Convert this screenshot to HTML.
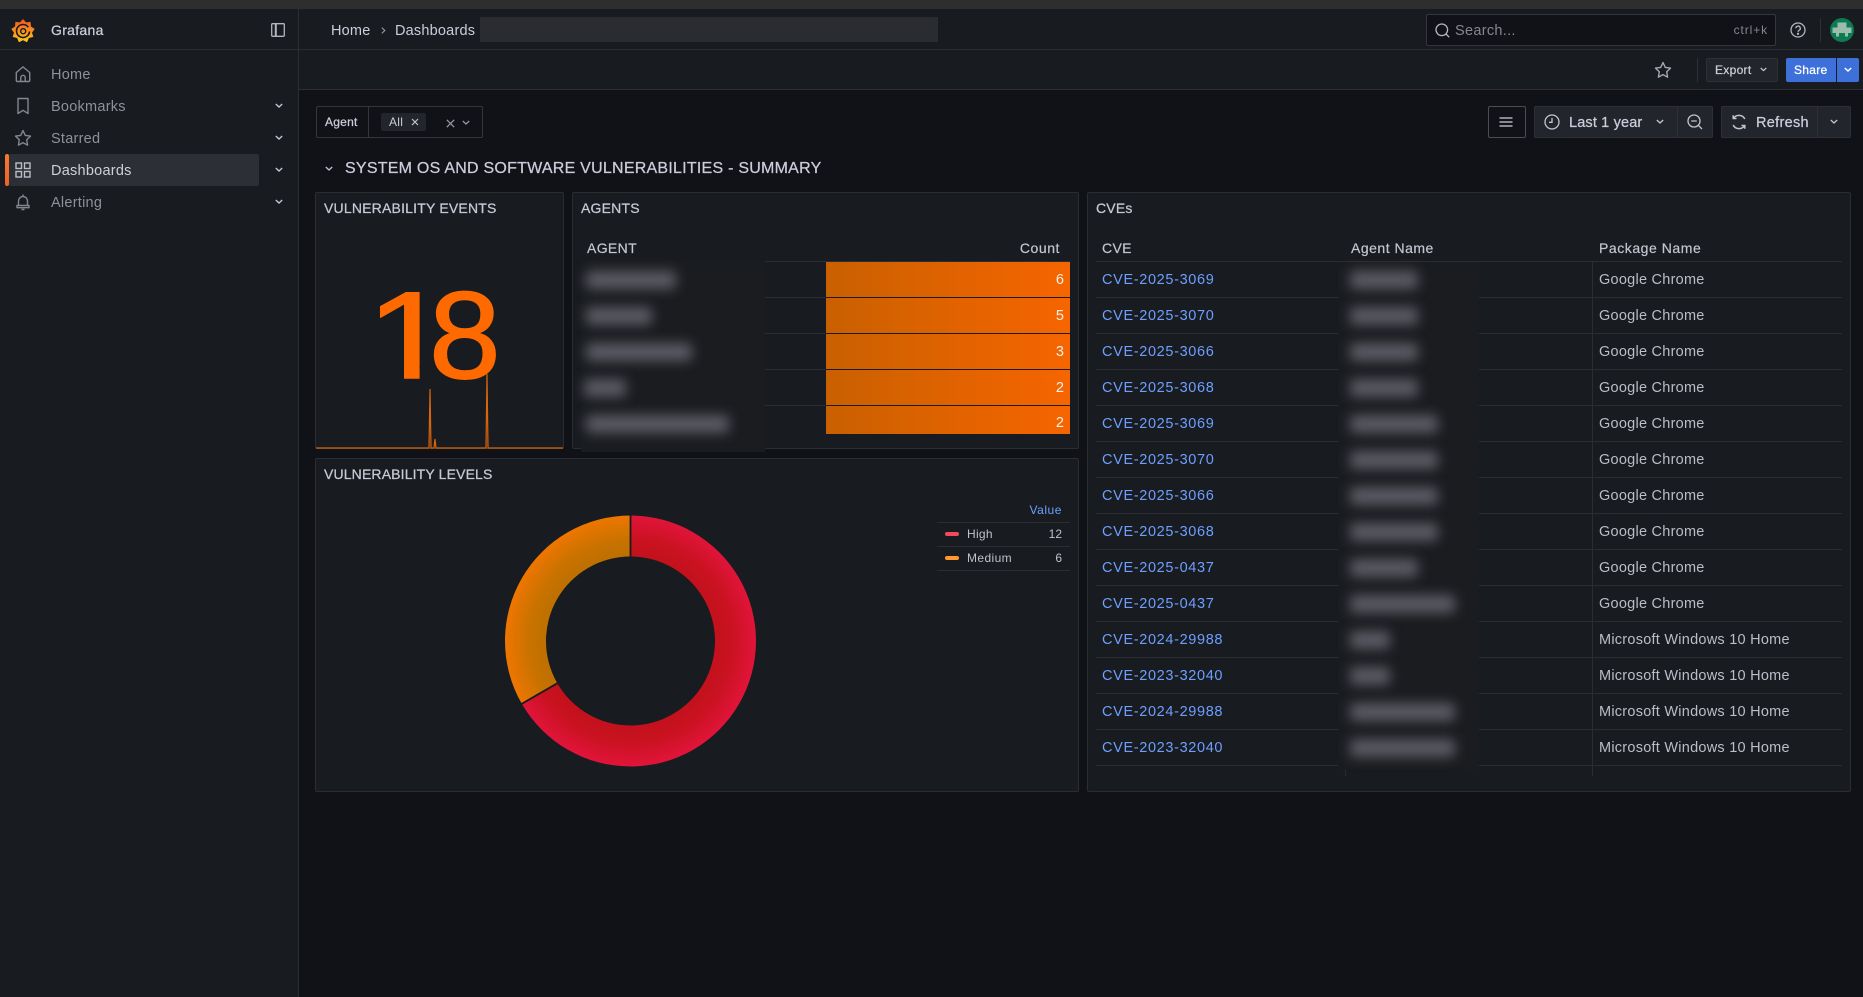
<!DOCTYPE html>
<html lang="en">
<head>
<meta charset="utf-8">
<title>Grafana</title>
<style>
html,body{margin:0;padding:0;width:1863px;height:997px;overflow:hidden;background:#111217;}
body{position:relative;font-family:"Liberation Sans",sans-serif;color:#ccccdc;font-size:14px;}
.a{position:absolute;box-sizing:border-box;}
.t{position:absolute;white-space:nowrap;line-height:20px;height:20px;}
.m{-webkit-text-stroke:.25px currentColor;}
.nav{font-size:14.5px;letter-spacing:.25px;color:#8f9099;left:51px;}
.panel{position:absolute;box-sizing:border-box;background:#181b1f;border:1px solid #2b2d33;border-radius:2px;}
.pt{font-size:14px;letter-spacing:.2px;color:#c8c9d6;-webkit-text-stroke:.25px currentColor;}
.line{position:absolute;height:1px;background:#2b2d33;}
.vl{position:absolute;width:1px;background:#2b2d33;}
.hd{font-size:14px;letter-spacing:.35px;color:#c4c5d2;-webkit-text-stroke:.2px currentColor;}
.cve{font-size:14.5px;letter-spacing:.65px;color:#6e9fff;left:1102px;}
.pk{font-size:14.5px;letter-spacing:.25px;color:#bcbdc8;left:1599px;}
.bar{position:absolute;left:826px;width:244px;background:linear-gradient(90deg,#c96000,#f66500);}
.num{position:absolute;right:799px;color:#f4f0ea;font-size:14.5px;line-height:20px;}
.bl{position:absolute;background:#5a5b63;height:18px;margin-top:-2px;filter:blur(6px);border-radius:4px;}
.big{position:absolute;white-space:nowrap;height:122px;line-height:122px;font-size:124px;color:#ff6a00;-webkit-text-stroke:1.5px #ff6a00;transform-origin:0 0;}
.btn{position:absolute;box-sizing:border-box;background:#22252b;border:1px solid #2e3036;}
svg{position:absolute;overflow:visible;display:block;}
</style>
</head>
<body>
<!-- browser strip -->
<div class="a" style="left:0;top:0;width:1863px;height:9px;background:#2e2e2e;"></div>
<!-- sidebar + header -->
<div class="a" style="left:0;top:9px;width:1863px;height:80px;background:#181b1f;"></div>
<div class="a" style="left:0;top:89px;width:298px;height:908px;background:#181b1f;"></div>
<div class="a" style="left:298px;top:9px;width:1px;height:988px;background:#2b2d33;"></div>
<div class="a" style="left:0;top:49px;width:1863px;height:1px;background:#2b2d33;"></div>
<div class="a" style="left:299px;top:89px;width:1564px;height:1px;background:#2b2d33;"></div>

<!-- logo -->
<svg style="left:10.500px;top:17.500px" width="24" height="25" viewBox="0 0 24 25">
<defs><linearGradient id="lg" x1="0" y1="1" x2="0" y2="0"><stop offset="0" stop-color="#fdc81a"/><stop offset=".4" stop-color="#fa9a1c"/><stop offset="1" stop-color="#f0562a"/></linearGradient></defs>
<path fill="url(#lg)" stroke="url(#lg)" stroke-width=".6" stroke-linejoin="round" d="M12 1.500L15.010 4.730 19.390 4.190 19.620 8.600 23.330 11 20.670 14.530 21.960 18.750 17.660 19.740 15.930 23.810 12 21.800 8.070 23.810 6.340 19.740 2.040 18.750 3.330 14.530 .67 11 4.380 8.600 4.610 4.190 8.990 4.730Z"/>
<path fill="none" stroke="#1c1a1c" stroke-width="1.600" d="M17.300 9.200A6.500 6.500 0 1 0 18.500 13.500"/>
<circle cx="12.200" cy="13.200" r="2.500" fill="none" stroke="#1c1a1c" stroke-width="1.400"/>
</svg>
<div class="t m" style="left:51px;top:20px;font-size:14px;letter-spacing:.3px;">Grafana</div>
<svg style="left:271px;top:23px" width="14" height="14" viewBox="0 0 14 14" fill="none" stroke="#b4b5c0" stroke-width="1.300"><rect x=".7" y=".7" width="12.600" height="12.600" rx="1"/><path d="M4.800 .7v12.600" stroke-width="2"/></svg>

<!-- nav -->
<div class="a" style="left:9px;top:154px;width:250px;height:32px;background:#2d2f36;border-radius:2px;"></div>
<div class="a" style="left:5px;top:154px;width:4px;height:32px;background:linear-gradient(180deg,#f97a2c,#f0602a);border-radius:2px;"></div>
<div class="t nav" style="top:65px;">Home</div>
<div class="t nav" style="top:97px;">Bookmarks</div>
<div class="t nav" style="top:129px;">Starred</div>
<div class="t nav" style="top:161px;color:#cfd0dc;">Dashboards</div>
<div class="t nav" style="top:193px;">Alerting</div>
<svg style="left:14px;top:65px" width="18" height="18" viewBox="0 0 18 18" fill="none" stroke="#85868f" stroke-width="1.400" stroke-linejoin="round"><path d="M2.300 7.500 9 1.900l6.700 5.600v7.700a1.300 1.300 0 0 1-1.300 1.300H3.600a1.300 1.300 0 0 1-1.300-1.300z"/><path d="M6.800 16.500v-4a2.200 2.200 0 0 1 4.400 0v4"/></svg>
<svg style="left:14px;top:97px" width="18" height="18" viewBox="0 0 18 18" fill="none" stroke="#85868f" stroke-width="1.400" stroke-linejoin="round"><path d="M4 1.500h10v15L9 13.300 4 16.500z"/></svg>
<svg style="left:14px;top:129px" width="18" height="18" viewBox="0 0 18 18" fill="none" stroke="#85868f" stroke-width="1.400" stroke-linejoin="round"><path d="M9 1.500l2.300 4.900 5.200.7-3.800 3.700.9 5.400L9 13.600l-4.600 2.600.9-5.400-3.800-3.700 5.200-.7z"/></svg>
<svg style="left:14px;top:161px" width="18" height="18" viewBox="0 0 18 18" fill="none" stroke="#bcbdc8" stroke-width="1.400"><rect x="2" y="2" width="5.500" height="5.500"/><rect x="10.500" y="2" width="5.500" height="5.500"/><rect x="2" y="10.500" width="5.500" height="5.500"/><rect x="10.500" y="10.500" width="5.500" height="5.500"/></svg>
<svg style="left:14px;top:193px" width="18" height="18" viewBox="0 0 18 18" fill="none" stroke="#85868f" stroke-width="1.400" stroke-linejoin="round"><path d="M4.500 12.500V8a4.500 4.500 0 0 1 9 0v4.500"/><path d="M3 12.500h12v2.200H3z"/><path d="M9 1.500v2M7.500 16.500h3"/></svg>
<svg style="left:275px;top:103px" width="8" height="6" viewBox="0 0 8 6" fill="none" stroke="#c4c5d0" stroke-width="1.400"><path d="M.8 1l3.200 3 3.200-3"/></svg>
<svg style="left:275px;top:135px" width="8" height="6" viewBox="0 0 8 6" fill="none" stroke="#c4c5d0" stroke-width="1.400"><path d="M.8 1l3.200 3 3.200-3"/></svg>
<svg style="left:275px;top:167px" width="8" height="6" viewBox="0 0 8 6" fill="none" stroke="#c4c5d0" stroke-width="1.400"><path d="M.8 1l3.200 3 3.200-3"/></svg>
<svg style="left:275px;top:199px" width="8" height="6" viewBox="0 0 8 6" fill="none" stroke="#c4c5d0" stroke-width="1.400"><path d="M.8 1l3.200 3 3.200-3"/></svg>

<!-- breadcrumbs -->
<div class="t" style="left:331px;top:21px;font-size:14.5px;letter-spacing:.2px;">Home</div>
<svg style="left:381px;top:27px" width="5" height="7" viewBox="0 0 5 7" fill="none" stroke="#9a9ba5" stroke-width="1.100"><path d="M.8 .6L3.800 3.500 .8 6.400"/></svg>
<div class="t" style="left:395px;top:21px;font-size:14.5px;letter-spacing:.2px;">Dashboards</div>
<div class="a" style="left:480px;top:17px;width:458px;height:25px;background:#2a2c31;"></div>

<!-- search -->
<div class="a" style="left:1426px;top:14px;width:350px;height:32px;background:#111217;border:1px solid #34363c;border-radius:2px;"></div>
<svg style="left:1435px;top:23px" width="15" height="15" viewBox="0 0 15 15" fill="none" stroke="#b4b5c0" stroke-width="1.300"><circle cx="6.800" cy="6.800" r="5.800"/><path d="M11 11l3.200 3.200"/></svg>
<div class="t" style="left:1455px;top:21px;font-size:14.5px;letter-spacing:.3px;color:#85868f;">Search...</div>
<div class="t" style="right:95px;top:20px;font-size:12px;letter-spacing:.9px;color:#85868f;">ctrl+k</div>
<svg style="left:1790px;top:22px" width="16" height="16" viewBox="0 0 16 16" fill="none" stroke="#b4b5c0" stroke-width="1.300"><circle cx="8" cy="8" r="7"/><path d="M5.900 6.300a2.200 2.200 0 1 1 3.300 1.900c-.8.500-1.200.9-1.200 1.700"/><circle cx="8" cy="11.800" r=".5" fill="#b4b5c0"/></svg>
<div class="a" style="left:1820px;top:18px;width:1px;height:24px;background:#2f3137;"></div>
<svg style="left:1830px;top:18px" width="24" height="24" viewBox="0 0 24 24"><circle cx="12" cy="12" r="12" fill="#0d7a54"/><path fill="#9cbcae" d="M7.500 4.500h9v5h5v5.500h-3.500v3.500h-3V15H9v3.500H6V15H2.500V9.500h5z"/></svg>

<!-- toolbar -->
<svg style="left:1654px;top:61px" width="18" height="18" viewBox="0 0 18 18" fill="none" stroke="#a5a6b0" stroke-width="1.400" stroke-linejoin="round"><path d="M9 1.500l2.300 4.900 5.200.7-3.800 3.700.9 5.400L9 13.600l-4.600 2.600.9-5.400-3.800-3.700 5.200-.7z"/></svg>
<div class="a" style="left:1697px;top:58px;width:1px;height:24px;background:#2f3137;"></div>
<div class="btn" style="left:1706px;top:58px;width:72px;height:24px;border-radius:2px;"></div>
<div class="t m" style="left:1715px;top:60px;font-size:12px;letter-spacing:.3px;">Export</div>
<svg style="left:1760px;top:67px" width="7" height="5" viewBox="0 0 7 5" fill="none" stroke="#c4c5d0" stroke-width="1.200"><path d="M.7 1l2.800 2.600L6.300 1"/></svg>
<div class="a" style="left:1786px;top:58px;width:50px;height:24px;background:#3d71d9;border-radius:2px 0 0 2px;"></div>
<div class="t m" style="left:1794px;top:60px;font-size:12px;letter-spacing:.3px;color:#fff;">Share</div>
<div class="a" style="left:1837px;top:58px;width:22px;height:24px;background:#3d71d9;border-radius:0 2px 2px 0;"></div>
<svg style="left:1844px;top:67px" width="8" height="6" viewBox="0 0 8 6" fill="none" stroke="#fff" stroke-width="1.400"><path d="M.8 1l3.200 3 3.200-3"/></svg>

<!-- variable -->
<div class="a" style="left:316px;top:106px;width:167px;height:32px;border:1px solid #34363c;border-radius:2px;"></div>
<div class="a" style="left:368px;top:106px;width:1px;height:32px;background:#34363c;"></div>
<div class="t m" style="left:325px;top:112px;font-size:12px;letter-spacing:.25px;">Agent</div>
<div class="a" style="left:381px;top:113px;width:45px;height:18px;background:#22252b;border-radius:2px;"></div>
<div class="t" style="left:389px;top:112px;font-size:12px;letter-spacing:.3px;">All</div>
<svg style="left:411px;top:118px" width="8" height="8" viewBox="0 0 8 8" fill="none" stroke="#c4c5d0" stroke-width="1.200"><path d="M1 1l6 6M7 1L1 7"/></svg>
<svg style="left:445.500px;top:118.500px" width="9" height="9" viewBox="0 0 9 9" fill="none" stroke="#9a9ba5" stroke-width="1.200"><path d="M.8 .8l7.400 7.400M8.200 .8L.8 8.200"/></svg>
<svg style="left:462px;top:120px" width="8" height="6" viewBox="0 0 8 6" fill="none" stroke="#9a9ba5" stroke-width="1.200"><path d="M.8 1l3.200 3 3.200-3"/></svg>

<!-- time controls -->
<div class="a" style="left:1488px;top:106px;width:38px;height:32px;border:1px solid #4b4d53;border-radius:2px;"></div>
<svg style="left:1499px;top:117px" width="14" height="10" viewBox="0 0 14 10" fill="none" stroke="#d0d1dc" stroke-width="1.300"><path d="M.5 1h13M.5 5h13M.5 9h13"/></svg>
<div class="btn" style="left:1534px;top:106px;width:144px;height:32px;border-radius:2px 0 0 2px;"></div>
<div class="btn" style="left:1677px;top:106px;width:36px;height:32px;border-radius:0 2px 2px 0;"></div>
<svg style="left:1544px;top:114px" width="16" height="16" viewBox="0 0 16 16" fill="none" stroke="#c4c5d0" stroke-width="1.300"><circle cx="8" cy="8" r="7"/><path d="M8 4v4.300H5"/></svg>
<div class="t m" style="left:1569px;top:113px;font-size:14.5px;letter-spacing:.15px;">Last 1 year</div>
<svg style="left:1656px;top:119px" width="8" height="6" viewBox="0 0 8 6" fill="none" stroke="#c4c5d0" stroke-width="1.300"><path d="M.8 1l3.200 3 3.200-3"/></svg>
<svg style="left:1687px;top:114px" width="16" height="16" viewBox="0 0 16 16" fill="none" stroke="#c4c5d0" stroke-width="1.300"><circle cx="7" cy="7" r="6"/><path d="M4.200 7h5.600M11.300 11.300l3.700 3.700"/></svg>
<div class="btn" style="left:1721px;top:106px;width:97px;height:32px;border-radius:2px 0 0 2px;"></div>
<div class="btn" style="left:1817px;top:106px;width:34px;height:32px;border-radius:0 2px 2px 0;"></div>
<svg style="left:1731px;top:114px" width="16" height="16" viewBox="0 0 16 16" fill="none" stroke="#c4c5d0" stroke-width="1.500"><path d="M13.800 5A6.500 6.500 0 0 0 2.500 4.300M2.200 11a6.500 6.500 0 0 0 11.300.7"/><path d="M2.200 1.200v3.300h3.300M13.800 14.800v-3.300h-3.300"/></svg>
<div class="t m" style="left:1756px;top:113px;font-size:14.5px;letter-spacing:.3px;">Refresh</div>
<svg style="left:1830px;top:119px" width="8" height="6" viewBox="0 0 8 6" fill="none" stroke="#c4c5d0" stroke-width="1.300"><path d="M.8 1l3.200 3 3.200-3"/></svg>

<!-- section -->
<svg style="left:325px;top:166px" width="8" height="6" viewBox="0 0 8 6" fill="none" stroke="#c4c5d0" stroke-width="1.300"><path d="M.8 1l3.200 3 3.200-3"/></svg>
<div class="t m" style="left:345px;top:159px;font-size:16px;letter-spacing:.24px;">SYSTEM OS AND SOFTWARE VULNERABILITIES - SUMMARY</div>

<!-- panel 1 -->
<div class="panel" style="left:315px;top:192px;width:249px;height:257px;"></div>
<div class="t pt" style="left:324px;top:198px;">VULNERABILITY EVENTS</div>
<div class="big" style="left:366px;top:275px;transform:scaleX(1.25);clip-path:polygon(0 0,100% 0,100% 91px,42.9px 91px,42.9px 112px,30.4px 112px,30.4px 91px,0 91px);">1</div>
<div class="big" style="left:429px;top:275px;transform:scaleX(1.04);">8</div>
<svg style="left:315px;top:370px" width="249" height="80" viewBox="0 0 249 80" fill="none" stroke="#d9650e" stroke-width="1.200"><path d="M1 78H114l1-59 1 59h3l1-9 1 9h50l1-74 1 74H248"/></svg>

<!-- panel 2 -->
<div class="panel" style="left:572px;top:192px;width:507px;height:257px;"></div>
<div class="t pt" style="left:581px;top:198px;">AGENTS</div>
<div class="t hd" style="left:587px;top:238px;">AGENT</div>
<div class="t hd" style="right:803px;top:238px;letter-spacing:.55px;">Count</div>
<div class="line" style="left:581px;top:261px;width:489px;"></div>
<div class="line" style="left:765px;top:297px;width:61px;"></div>
<div class="line" style="left:765px;top:333px;width:61px;"></div>
<div class="line" style="left:765px;top:369px;width:61px;"></div>
<div class="line" style="left:765px;top:405px;width:61px;"></div>
<div class="bar" style="top:262px;height:35px;"></div>
<div class="bar" style="top:298px;height:35px;"></div>
<div class="bar" style="top:334px;height:35px;"></div>
<div class="bar" style="top:370px;height:35px;"></div>
<div class="bar" style="top:406px;height:28px;"></div>
<div class="num" style="top:270px;">6</div>
<div class="num" style="top:306px;">5</div>
<div class="num" style="top:342px;">3</div>
<div class="num" style="top:378px;">2</div>
<div class="num" style="top:413px;">2</div>
<div class="a" style="left:581px;top:261px;width:184px;height:191px;background:#1a1c20;overflow:hidden;"></div>
<div class="bl" style="left:586px;top:273px;width:90px;"></div>
<div class="bl" style="left:586px;top:309px;width:66px;"></div>
<div class="bl" style="left:586px;top:345px;width:106px;"></div>
<div class="bl" style="left:584px;top:381px;width:42px;"></div>
<div class="bl" style="left:586px;top:417px;width:143px;"></div>

<!-- panel 3 -->
<div class="panel" style="left:315px;top:458px;width:764px;height:334px;"></div>
<div class="t pt" style="left:324px;top:464px;letter-spacing:.15px;">VULNERABILITY LEVELS</div>
<svg style="left:0;top:0" width="1863" height="997" viewBox="0 0 1863 997">
<defs>
<radialGradient id="rg" gradientUnits="userSpaceOnUse" cx="630.500" cy="641" r="125.500"><stop offset=".67" stop-color="#c3111c"/><stop offset=".8" stop-color="#c91220"/><stop offset="1" stop-color="#e1143a"/></radialGradient>
<radialGradient id="og" gradientUnits="userSpaceOnUse" cx="630.500" cy="641" r="125.500"><stop offset=".67" stop-color="#bd7000"/><stop offset=".8" stop-color="#c87200"/><stop offset="1" stop-color="#ee7600"/></radialGradient>
</defs>
<path fill="url(#rg)" d="M630.500 515.500A125.500 125.500 0 1 1 521.800 703.750L557.300 683.250A84.500 84.500 0 1 0 630.500 556.500Z"/>
<path fill="url(#og)" d="M521.800 703.750A125.500 125.500 0 0 1 630.500 515.500L630.500 556.500A84.500 84.500 0 0 0 557.300 683.250Z"/>
<path stroke="#181b1f" stroke-width="1.800" d="M630.500 514V558M520 704.800L559 682.300"/>
</svg>
<div class="t" style="right:801px;top:500px;font-size:12px;letter-spacing:.55px;color:#6e9fff;">Value</div>
<div class="line" style="left:937px;top:522px;width:133px;"></div>
<div class="line" style="left:937px;top:546px;width:133px;"></div>
<div class="line" style="left:937px;top:570px;width:133px;"></div>
<div class="a" style="left:945px;top:532px;width:14px;height:4px;border-radius:2px;background:#f2495c;"></div>
<div class="a" style="left:945px;top:556px;width:14px;height:4px;border-radius:2px;background:#ff9830;"></div>
<div class="t" style="left:967px;top:524px;font-size:12px;letter-spacing:.3px;color:#c0c1cc;">High</div>
<div class="t" style="left:967px;top:548px;font-size:12px;letter-spacing:.4px;color:#c0c1cc;">Medium</div>
<div class="t" style="right:801px;top:524px;font-size:12px;color:#c0c1cc;">12</div>
<div class="t" style="right:801px;top:548px;font-size:12px;color:#c0c1cc;">6</div>

<!-- panel 4 -->
<div class="panel" style="left:1087px;top:192px;width:764px;height:600px;"></div>
<div class="t pt" style="left:1096px;top:198px;">CVEs</div>
<div class="t hd" style="left:1102px;top:238px;">CVE</div>
<div class="t hd" style="left:1351px;top:238px;letter-spacing:.5px;">Agent Name</div>
<div class="t hd" style="left:1599px;top:238px;letter-spacing:.55px;">Package Name</div>
<div class="line" style="left:1096px;top:261px;width:746px;"></div>
<div class="line" style="left:1096px;top:297px;width:746px;"></div>
<div class="line" style="left:1096px;top:333px;width:746px;"></div>
<div class="line" style="left:1096px;top:369px;width:746px;"></div>
<div class="line" style="left:1096px;top:405px;width:746px;"></div>
<div class="line" style="left:1096px;top:441px;width:746px;"></div>
<div class="line" style="left:1096px;top:477px;width:746px;"></div>
<div class="line" style="left:1096px;top:513px;width:746px;"></div>
<div class="line" style="left:1096px;top:549px;width:746px;"></div>
<div class="line" style="left:1096px;top:585px;width:746px;"></div>
<div class="line" style="left:1096px;top:621px;width:746px;"></div>
<div class="line" style="left:1096px;top:657px;width:746px;"></div>
<div class="line" style="left:1096px;top:693px;width:746px;"></div>
<div class="line" style="left:1096px;top:729px;width:746px;"></div>
<div class="line" style="left:1096px;top:765px;width:746px;"></div>
<div class="vl" style="left:1345px;top:261px;height:515px;"></div>
<div class="vl" style="left:1592px;top:261px;height:515px;"></div>
<div class="a" style="left:1338px;top:262px;width:141px;height:508px;background:#1a1c20;"></div>

<div class="t cve" style="top:270px;">CVE-2025-3069</div>
<div class="t cve" style="top:306px;">CVE-2025-3070</div>
<div class="t cve" style="top:342px;">CVE-2025-3066</div>
<div class="t cve" style="top:378px;">CVE-2025-3068</div>
<div class="t cve" style="top:414px;">CVE-2025-3069</div>
<div class="t cve" style="top:450px;">CVE-2025-3070</div>
<div class="t cve" style="top:486px;">CVE-2025-3066</div>
<div class="t cve" style="top:522px;">CVE-2025-3068</div>
<div class="t cve" style="top:558px;">CVE-2025-0437</div>
<div class="t cve" style="top:594px;">CVE-2025-0437</div>
<div class="t cve" style="top:630px;">CVE-2024-29988</div>
<div class="t cve" style="top:666px;">CVE-2023-32040</div>
<div class="t cve" style="top:702px;">CVE-2024-29988</div>
<div class="t cve" style="top:738px;">CVE-2023-32040</div>

<div class="bl" style="left:1350px;top:273px;width:68px;"></div>
<div class="bl" style="left:1350px;top:309px;width:68px;"></div>
<div class="bl" style="left:1350px;top:345px;width:68px;"></div>
<div class="bl" style="left:1350px;top:381px;width:68px;"></div>
<div class="bl" style="left:1350px;top:417px;width:88px;"></div>
<div class="bl" style="left:1350px;top:453px;width:88px;"></div>
<div class="bl" style="left:1350px;top:489px;width:88px;"></div>
<div class="bl" style="left:1350px;top:525px;width:88px;"></div>
<div class="bl" style="left:1350px;top:561px;width:68px;"></div>
<div class="bl" style="left:1350px;top:597px;width:105px;"></div>
<div class="bl" style="left:1350px;top:633px;width:40px;"></div>
<div class="bl" style="left:1350px;top:669px;width:40px;"></div>
<div class="bl" style="left:1350px;top:705px;width:105px;"></div>
<div class="bl" style="left:1350px;top:741px;width:105px;"></div>

<div class="t pk" style="top:270px;">Google Chrome</div>
<div class="t pk" style="top:306px;">Google Chrome</div>
<div class="t pk" style="top:342px;">Google Chrome</div>
<div class="t pk" style="top:378px;">Google Chrome</div>
<div class="t pk" style="top:414px;">Google Chrome</div>
<div class="t pk" style="top:450px;">Google Chrome</div>
<div class="t pk" style="top:486px;">Google Chrome</div>
<div class="t pk" style="top:522px;">Google Chrome</div>
<div class="t pk" style="top:558px;">Google Chrome</div>
<div class="t pk" style="top:594px;">Google Chrome</div>
<div class="t pk" style="top:630px;">Microsoft Windows 10 Home</div>
<div class="t pk" style="top:666px;">Microsoft Windows 10 Home</div>
<div class="t pk" style="top:702px;">Microsoft Windows 10 Home</div>
<div class="t pk" style="top:738px;">Microsoft Windows 10 Home</div>
</body>
</html>
